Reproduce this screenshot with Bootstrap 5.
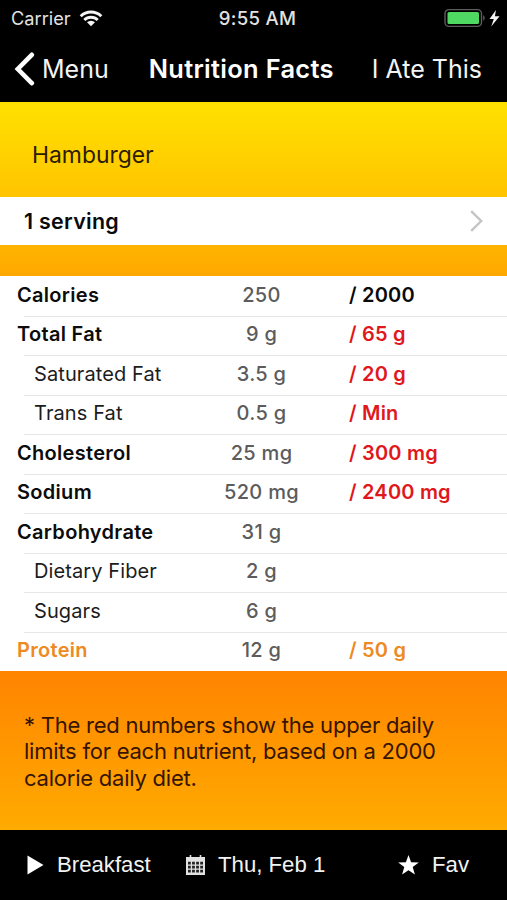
<!DOCTYPE html>
<html lang="en">
<head>
<meta charset="utf-8">
<meta name="viewport" content="width=device-width, initial-scale=1">
<title>Nutrition Facts</title>
<link href="https://cdn.jsdelivr.net/npm/bootstrap@5.3.0/dist/css/bootstrap.min.css" rel="stylesheet">
<style>
body { font-family: Inter, "Liberation Sans", sans-serif; font-size: 20px; line-height: 24px; color: #111; }
.screen { height: 900px; background: #000; }
.status-row { height: 36px; color: #e2e2e2; font-size: 18.2px; display: grid; grid-template-columns: 1fr auto 1fr; padding: 0 7px 0 11px; }
.clock { font-size: 18.6px; letter-spacing: .3px; padding-left: 4px; }
.title-row { height: 66px; color: #f4f4f4; padding: 0 25px 0 14px; font-size: 25px; }
.title-row .heading { font-size: 25.4px; line-height: 30px; letter-spacing: .32px; font-weight: 600; color: #fff; margin: 0 0 0 40px; }
.back-label { margin-left: 7px; }
.hero { height: 95px; background: linear-gradient(#ffe100, #ffc400); padding: 10px 32px 0; font-size: 22.9px; color: #2b1c00; }
.serving { height: 48px; background: #fff; padding: 0 24px; font-size: 21.4px; letter-spacing: .3px; font-weight: 600; color: #0a0a0a; }
.strip { height: 31px; background: linear-gradient(#ffb400, #ffa800); }
.facts { height: 395px; background: #fff; }
.fact { height: 39.5px; position: relative; padding: 0 0 2px 17px; }
.fact + .fact::before { content: ""; position: absolute; left: 24px; right: 0; top: 0; height: 1px; background: #e6e6e6; }
.fact-name { width: 190px; font-weight: 600; letter-spacing: .3px; color: #0c0c0c; }
.fact-sub .fact-name { font-weight: 400; letter-spacing: .1px; padding-left: 17px; color: #1c1c1c; }
.fact-value { width: 109px; text-align: center; font-weight: 500; letter-spacing: .3px; color: #5c5c5c; }
.fact-limit { padding-left: 33px; font-weight: 600; letter-spacing: .2px; color: #e0181c; }
.fact .ink { color: #0a0a0a; }
.fact .amber { color: #ed8a22; }
.footnote { height: 159px; background: linear-gradient(#ff8400, #ffab00); padding: 41px 24px 0; font-size: 22px; line-height: 26.3px; letter-spacing: -.23px; color: #351400; }
.toolbar-row { height: 70px; color: #f2f2f2; font-family: "Liberation Sans", Arial, sans-serif; font-size: 22.2px; padding-left: 27px; display: grid; grid-template-columns: 159px 212px 1fr; }
.tool-label { margin-left: 13px; }
svg { display: block; flex: none; }
</style>
</head>
<body>
<main class="screen d-flex flex-column">
  <header>
    <div class="status-row align-items-center">
      <div class="d-flex align-items-center">
        <span class="carrier">Carrier</span>
        <svg class="ms-2" width="24" height="17" viewBox="0 0 24 17" fill="none" stroke="#f5f5f5" stroke-width="2.9"><path d="M1.700 6.200a14.800 14.800 0 0 1 20.600 0M5.300 10a9.600 9.600 0 0 1 13.400 0"/><path d="M12 16.200 8 12.300a5.800 5.800 0 0 1 8 0z" fill="#f5f5f5" stroke="none"/></svg>
      </div>
      <span class="clock fw-medium">9:55 AM</span>
      <div class="d-flex align-items-center justify-content-end">
        <svg width="56" height="20" viewBox="0 0 56 20"><rect x="1" y="1.600" width="36.500" height="16.800" rx="4" fill="none" stroke="#5c5c5c" stroke-width="1.400"/><rect x="3.500" y="4" width="31.500" height="12" rx="1.600" fill="#4fd862"/><path d="M39.200 7.300c2 .8 2 4.600 0 5.400z" fill="#5c5c5c"/><path d="M52 2 45.500 11h4.300l-2.600 7.500 8.400-10.200h-4.700z" fill="#f4f4f4"/></svg>
      </div>
    </div>
    <nav class="title-row d-flex align-items-center">
      <svg width="21" height="34" viewBox="0 0 21 34" fill="none" stroke="#fff" stroke-width="4.600" stroke-linecap="round"><path d="M17.800 2.800 3.800 17l14 14.200"/></svg>
      <span class="back-label">Menu</span>
      <h1 class="heading">Nutrition Facts</h1>
      <span class="ms-auto">I Ate This</span>
    </nav>
  </header>

  <section class="hero d-flex align-items-center"><span>Hamburger</span></section>
  <section class="serving d-flex align-items-center justify-content-between">
    <span>1 serving</span>
    <svg width="13" height="22" viewBox="0 0 13 22" fill="none" stroke="#c4c4c6" stroke-width="2.400"><path d="m1.200 1.200 10 9.800-10 9.800"/></svg>
  </section>
  <div class="strip"></div>

  <section class="facts">
    <div class="fact d-flex align-items-center"><span class="fact-name">Calories</span><span class="fact-value">250</span><span class="fact-limit ink">/ 2000</span></div>
    <div class="fact d-flex align-items-center"><span class="fact-name">Total Fat</span><span class="fact-value">9 g</span><span class="fact-limit">/ 65 g</span></div>
    <div class="fact fact-sub d-flex align-items-center"><span class="fact-name">Saturated Fat</span><span class="fact-value">3.5 g</span><span class="fact-limit">/ 20 g</span></div>
    <div class="fact fact-sub d-flex align-items-center"><span class="fact-name">Trans Fat</span><span class="fact-value">0.5 g</span><span class="fact-limit">/ Min</span></div>
    <div class="fact d-flex align-items-center"><span class="fact-name">Cholesterol</span><span class="fact-value">25 mg</span><span class="fact-limit">/ 300 mg</span></div>
    <div class="fact d-flex align-items-center"><span class="fact-name">Sodium</span><span class="fact-value">520 mg</span><span class="fact-limit">/ 2400 mg</span></div>
    <div class="fact d-flex align-items-center"><span class="fact-name">Carbohydrate</span><span class="fact-value">31 g</span></div>
    <div class="fact fact-sub d-flex align-items-center"><span class="fact-name">Dietary Fiber</span><span class="fact-value">2 g</span></div>
    <div class="fact fact-sub d-flex align-items-center"><span class="fact-name">Sugars</span><span class="fact-value">6 g</span></div>
    <div class="fact d-flex align-items-center"><span class="fact-name amber">Protein</span><span class="fact-value">12 g</span><span class="fact-limit amber">/ 50 g</span></div>
  </section>

  <section class="footnote">* The red numbers show the upper daily<br>limits for each nutrient, based on a 2000<br>calorie daily diet.</section>

  <footer class="toolbar-row align-items-center">
    <span class="d-flex align-items-center"><svg width="17" height="20" viewBox="0 0 17 20"><path d="M.5.5 16.500 10 .5 19.500z" fill="#fff"/></svg><span class="tool-label">Breakfast</span></span>
    <span class="d-flex align-items-center"><svg width="19" height="20" viewBox="0 0 19 20"><path d="M0 2h19v18H0z" fill="#e2e2e2"/><path d="M4.500 0v3.500M14.500 0v3.500" stroke="#e2e2e2" stroke-width="1.600"/><path d="M2 8.200h15M2 12.200h15M2 16.200h15" stroke="#222" stroke-width="2.800" stroke-dasharray="2.800 1.270"/></svg><span class="tool-label">Thu, Feb 1</span></span>
    <span class="d-flex align-items-center"><svg width="21" height="20" viewBox="0 0 21 20"><path d="m10.500 0 2.600 7.200 7.700.2-6.100 4.700 2.200 7.500-6.400-4.400-6.400 4.400 2.200-7.500L.2 7.400l7.700-.2z" fill="#fff"/></svg><span class="tool-label">Fav</span></span>
  </footer>
</main>
<script src="https://cdn.jsdelivr.net/npm/bootstrap@5.3.0/dist/js/bootstrap.bundle.min.js"></script>
</body>
</html>
